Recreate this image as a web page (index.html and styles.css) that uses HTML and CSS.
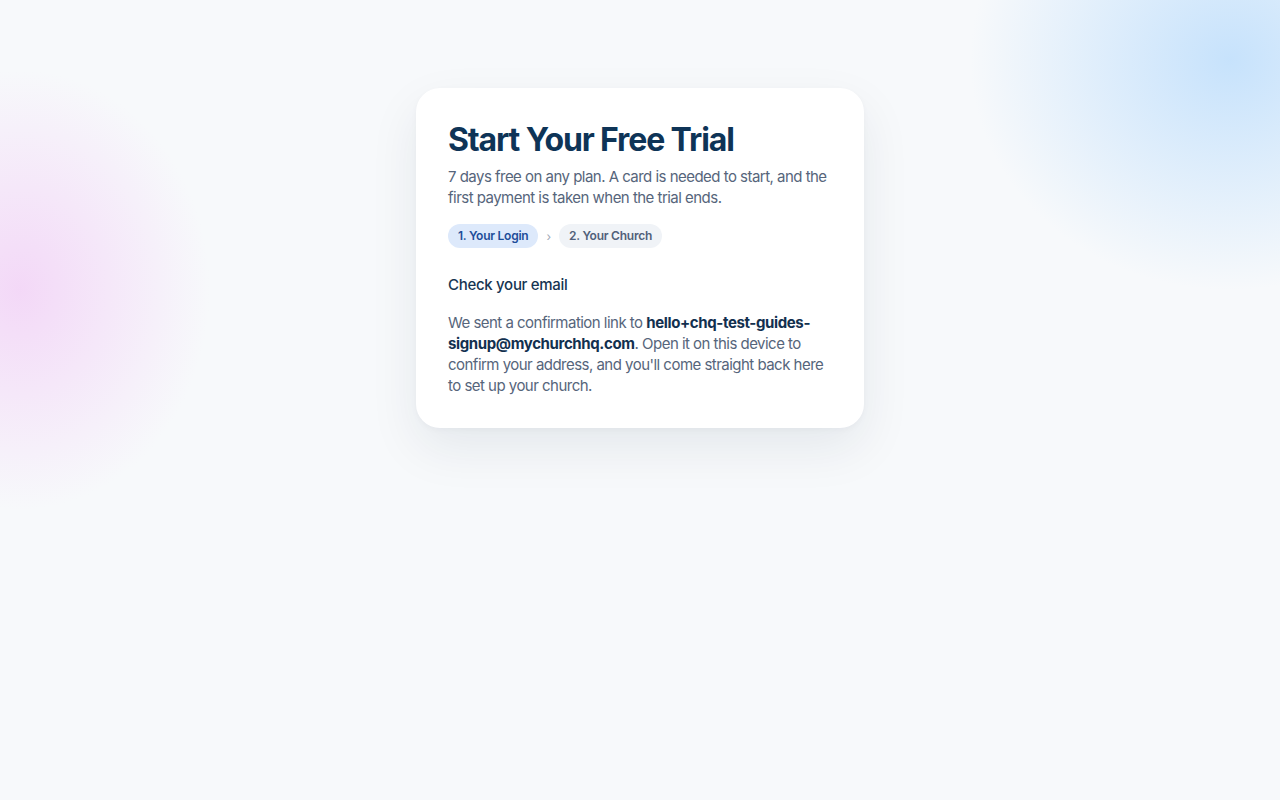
FILE: index.html
```html
<!DOCTYPE html>
<html>
<head>
  <title>Start Your Free Trial</title>
  <link rel="stylesheet" href="styles.css">
</head>
<body>
  <div class="card">
    <h1>Start Your Free Trial</h1>
    <p class="lead">7 days free on any plan. A card is needed to start, and the first payment is taken when the trial ends.</p>

    <div class="steps">
      <span class="step active">1. Your Login</span>
      <span class="sep">›</span>
      <span class="step">2. Your Church</span>
    </div>

    <h2>Check your email</h2>
    <p class="msg">We sent a confirmation link to <strong>hello+chq-test-guides-signup@mychurchhq.com</strong>. Open it on this device to confirm your address, and you'll come straight back here to set up your church.</p>
  </div>
</body>
</html>
```

FILE: styles.css
```css
body {
  margin: 0;
  min-height: 100vh;
  background-color: #f7f9fb;
  /* soft glows: pink on the left, blue top right */
  background-image:
    radial-gradient(ellipse 190px 220px at 20px 290px, rgba(242, 205, 246, 0.75), rgba(242, 205, 246, 0) 100%),
    radial-gradient(ellipse 260px 230px at 1230px 60px, rgba(196, 225, 252, 0.95), rgba(196, 225, 252, 0) 100%);
  background-repeat: no-repeat;
  font-family: Inter, "Noto Sans", sans-serif;
  display: flex;
  flex-direction: column;
  align-items: center;
  padding-top: 88px;
  box-sizing: border-box;
}

.card {
  width: 448px;
  box-sizing: border-box;
  padding: 32px;
  background: #fff;
  border-radius: 24px;
  box-shadow: 0 20px 50px rgba(15, 40, 70, 0.08), 0 2px 6px rgba(15, 40, 70, 0.03);
}

.card h1 {
  margin: 0;
  font-size: 32px;
  line-height: 40px;
  font-weight: 700;
  letter-spacing: -0.035em;
  color: #0e3457;
}

.lead {
  margin: 6px 0 0;
  font-size: 15px;
  line-height: 21px;
  letter-spacing: -0.035em;
  color: #56657b;
}

.steps {
  display: flex;
  align-items: center;
  gap: 8px;
  margin-top: 16px;
}
.step {
  height: 24px;
  line-height: 24px;
  padding: 0 10px;
  border-radius: 12px;
  font-size: 12px;
  font-weight: 600;
  letter-spacing: -0.02em;
  background: #f0f3f7;
  color: #51607a;
}
.step.active {
  background: #dde9fb;
  color: #1d4d99;
}
.sep {
  font-size: 12px;
  color: #a0a8b5;
}

.card h2 {
  margin: 26px 0 0;
  font-size: 15px;
  line-height: 22px;
  font-weight: 500;
  letter-spacing: -0.02em;
  color: #163552;
}

.msg {
  margin: 16px 0 0;
  font-size: 15px;
  line-height: 21px;
  letter-spacing: -0.035em;
  color: #56657b;
}
.msg strong {
  font-weight: 700;
  letter-spacing: -0.025em;
  color: #12304f;
}
```
